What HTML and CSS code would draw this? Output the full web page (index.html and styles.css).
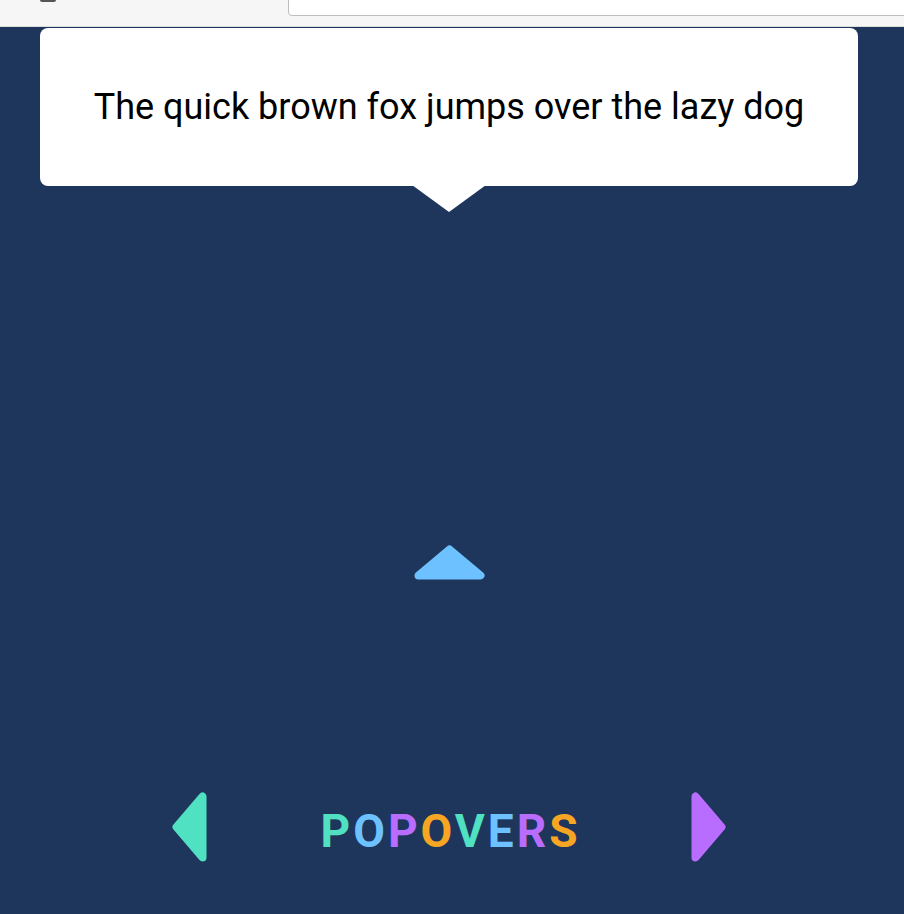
FILE: index.html
```html
<!DOCTYPE html>
<html lang="en">
<head>
<meta charset="utf-8">
<title>Popovers</title>
<link rel="stylesheet" href="styles.css">
</head>
<body>
<div class="chrome">
  <span class="chrome-icon"></span>
  <div class="chrome-input"></div>
</div>
<main class="stage">
  <div class="popover">
    <p class="popover-text">The quick brown fox jumps over the lazy dog</p>
  </div>
  <div class="target">
    <svg class="up-arrow" width="71" height="35" viewBox="0 0 71 35">
      <polygon points="4.5,30.5 35.5,4.5 66.5,30.5" fill="#6ec1ff" stroke="#6ec1ff" stroke-width="8" stroke-linejoin="round"/>
    </svg>
  </div>
  <nav class="nav">
    <svg class="nav-arrow" width="35" height="70" viewBox="0 0 35 70">
      <polygon points="4.5,35 30.5,4.5 30.5,65.5" fill="#4fe1c1" stroke="#4fe1c1" stroke-width="8" stroke-linejoin="round"/>
    </svg>
    <h1 class="title"><span class="c1">P</span><span class="c2">O</span><span class="c3">P</span><span class="c4">O</span><span class="c1">V</span><span class="c2">E</span><span class="c3">R</span><span class="c4">S</span></h1>
    <svg class="nav-arrow" width="35" height="70" viewBox="0 0 35 70">
      <polygon points="30.5,35 4.5,4.5 4.5,65.5" fill="#b86dff" stroke="#b86dff" stroke-width="8" stroke-linejoin="round"/>
    </svg>
  </nav>
</main>
</body>
</html>
```
FILE: styles.css
```css
html, body {
  margin: 0;
  padding: 0;
}
body {
  background: #1f365c;
  font-family: Roboto, "Liberation Sans", sans-serif;
  width: 904px;
  height: 914px;
  overflow: hidden;
}
.chrome {
  position: relative;
  height: 26px;
  background: #f6f6f6;
  border-bottom: 1px solid #dcdcdc;
}
.chrome-icon {
  position: absolute;
  left: 40px;
  top: -10px;
  width: 16px;
  height: 12px;
  border-radius: 2px;
  background: #555;
}
.chrome-input {
  position: absolute;
  left: 288px;
  right: -10px;
  top: -4px;
  height: 18px;
  background: #fff;
  border: 1px solid #bdbdbd;
  border-radius: 0 0 0 4px;
}
.stage {
  position: relative;
  width: 898px;
  height: 887px;
  display: flex;
  flex-direction: column;
  align-items: center;
}
.popover {
  position: absolute;
  left: 40px;
  top: 1px;
  width: 818px;
  height: 158px;
  background: #fff;
  border-radius: 8px;
  display: flex;
  align-items: center;
  justify-content: center;
}
.popover::after {
  content: "";
  position: absolute;
  left: 372px;
  top: 157px;
  border-left: 37px solid transparent;
  border-right: 37px solid transparent;
  border-top: 27px solid #fff;
}
.popover-text {
  margin: 0;
  color: #000;
  font-size: 36px;
  font-weight: 400;
}
.target {
  margin-top: 518px;
  height: 35px;
}
.up-arrow {
  display: block;
}
.nav {
  margin-top: 212px;
  display: flex;
  align-items: center;
  width: 554px;
  justify-content: space-between;
}
.nav-arrow {
  display: block;
}
.title {
  margin: 8px 0 0;
  padding-left: 3px;
  font-size: 46px;
  font-weight: 700;
  letter-spacing: 3px;
  line-height: 1;
}
.c1 { color: #4fe1c1; }
.c2 { color: #6ec1ff; }
.c3 { color: #b86dff; }
.c4 { color: #f6a623; }
```
